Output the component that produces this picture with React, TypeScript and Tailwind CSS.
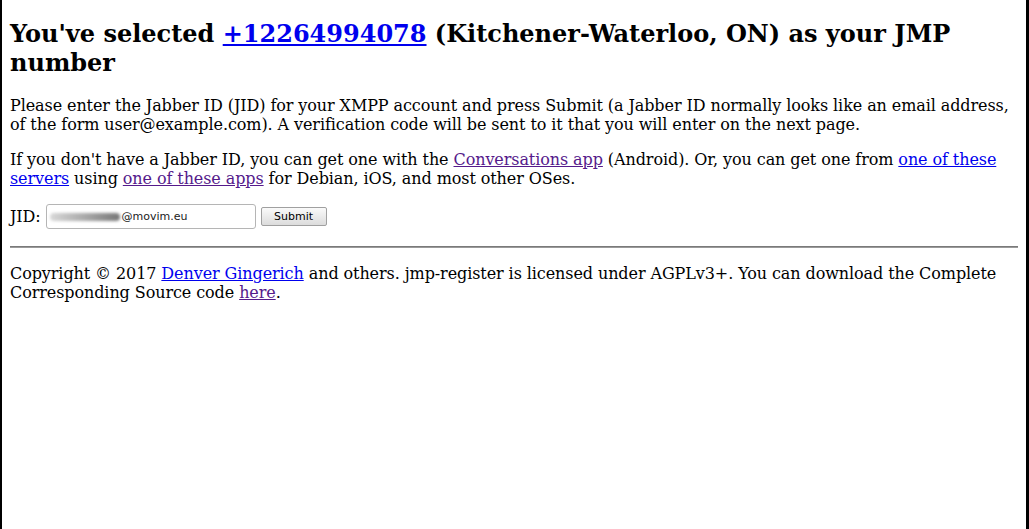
import React from 'react';

export default function App() {
    return (
        <div className="min-h-[529px] w-full bg-white border-l-2 border-r-[3px] border-black text-black font-['DejaVu_Serif',serif] text-[16px] leading-[normal]">
            <div className="flex flex-col px-2">
                <h2 className="mt-[19px] text-[24px] leading-[29px] font-bold">
                    You've selected <a href="#" className="text-[#0000ee] underline">+12264994078</a> (Kitchener-Waterloo, ON) as your JMP number
                </h2>

                <p className="mt-[19px] tracking-[-0.09px]">
                    Please enter the Jabber ID (JID) for your XMPP account and press Submit (a Jabber ID normally looks like an email address, of the form user@example.com). A verification code will be sent to it that you will enter on the next page.
                </p>

                <p className="mt-[16px] tracking-[-0.09px]">
                    If you don't have a Jabber ID, you can get one with the <a href="#" className="text-[#551a8b] underline">Conversations app</a> (Android). Or, you can get one from <a href="#" className="text-[#0000ee] underline">one of these servers</a> using <a href="#" className="text-[#551a8b] underline">one of these apps</a> for Debian, iOS, and most other OSes.
                </p>

                {/* JID form */}
                <div className="mt-[15px] flex h-[27px] items-center">
                    <span className="tracking-[-0.09px]">JID:</span>
                    <div className="ml-[5px] flex h-[25px] w-[210px] items-center rounded-[3px] border border-[#b5b5b5] bg-white pl-[3px] font-['DejaVu_Sans',sans-serif] text-[11px] text-[#222]">
                        <span className="h-[8px] w-[70px] rounded-full bg-gradient-to-r from-[#d8d8d8] via-[#a9a9a9] to-[#777] blur-[1.5px]" />
                        <span className="ml-[2px]">@movim.eu</span>
                    </div>
                    <button className="ml-[5px] h-[19px] w-[66px] rounded-[2px] border border-[#a0a0a0] bg-gradient-to-b from-[#fafafa] to-[#dcdcdc] font-['DejaVu_Sans',sans-serif] text-[11px] leading-none text-black">
                        Submit
                    </button>
                </div>

                <div className="mt-[16px] h-[2px] border-t border-[#7a7a7a] bg-[#9a9a9a]" />

                <p className="mt-[16px] tracking-[-0.09px]">
                    Copyright © 2017 <a href="#" className="text-[#0000ee] underline">Denver Gingerich</a> and others. jmp-register is licensed under AGPLv3+. You can download the Complete Corresponding Source code <a href="#" className="text-[#551a8b] underline">here</a>.
                </p>
            </div>
        </div>
    );
}
